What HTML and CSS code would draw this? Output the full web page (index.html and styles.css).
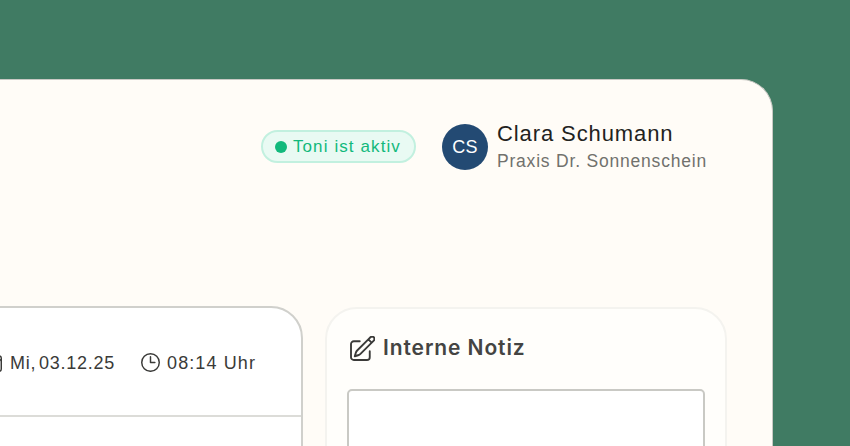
FILE: index.html
```html
<!DOCTYPE html>
<html lang="de">
<head>
    <meta charset="UTF-8">
    <title>Praxis Dr. Sonnenschein</title>
    <link rel="stylesheet" href="styles.css">
</head>
<body>
    <div class="panel">
        <header class="topbar">
            <div class="status"><span class="status-dot"></span>Toni ist aktiv</div>
            <div class="user">
                <div class="avatar">CS</div>
                <div>
                    <div class="user-name">Clara Schumann</div>
                    <div class="user-org">Praxis Dr. Sonnenschein</div>
                </div>
            </div>
        </header>
        <div class="columns">
            <section class="call-card">
                <div class="call-meta">
                    <span class="meta-item meta-date">
                        <svg class="icon" viewBox="2.25 2.25 19.5 19.5" fill="none" stroke="#3a3a38" stroke-width="1.5" stroke-linecap="round" stroke-linejoin="round"><path d="M6.750 3v2.250M17.250 3v2.250M3 18.750V7.500a2.250 2.250 0 0 1 2.250-2.250h13.500A2.250 2.250 0 0 1 21 7.500v11.250m-18 0A2.250 2.250 0 0 0 5.250 21h13.500A2.250 2.250 0 0 0 21 18.750m-18 0v-7.500A2.250 2.250 0 0 1 5.250 9h13.500A2.250 2.250 0 0 1 21 11.250v7.500"/></svg>
                        Mi, 03.12.25
                    </span>
                    <span class="meta-item meta-time">
                        <svg class="icon" viewBox="2.25 2.25 19.5 19.5" fill="none" stroke="#3a3a38" stroke-width="1.5" stroke-linecap="round" stroke-linejoin="round"><path d="M12 6v6h4.500m4.500 0a9 9 0 1 1-18 0 9 9 0 0 1 18 0Z"/></svg>
                        08:14 Uhr
                    </span>
                </div>
            </section>
            <section class="note-card">
                <h2 class="note-title">
                    <svg class="note-icon" viewBox="2.2 1.8 20 20" fill="none" stroke="#3a3a38" stroke-width="1.5" stroke-linecap="round" stroke-linejoin="round"><path d="m16.862 4.487 1.687-1.688a1.875 1.875 0 1 1 2.652 2.652L10.582 16.070a4.500 4.500 0 0 1-1.897 1.130L6 18l.8-2.685a4.500 4.500 0 0 1 1.130-1.897l8.932-8.931Zm0 0L19.500 7.125M18 14v4.750A2.250 2.250 0 0 1 15.750 21H5.250A2.250 2.250 0 0 1 3 18.750V8.250A2.250 2.250 0 0 1 5.250 6H10"/></svg>
                    Interne Notiz
                </h2>
                <div class="note-field"></div>
            </section>
        </div>
    </div>
</body>
</html>
```

FILE: styles.css
```css
html, body {
    height: 100%;
    overflow: hidden;
}
body {
    margin: 0;
    padding: 79px 77px 0 0;
    box-sizing: border-box;
    background: #407b63;
    font-family: "Liberation Sans", Arial, sans-serif;
    color: #3a3a38;
}
.panel {
    margin-left: -300px;
    height: 367px;
    box-sizing: border-box;
    overflow: hidden;
    padding: 41px 45px 0 0;
    background: #fffcf7;
    border: 1px solid #c9c9c4;
    border-bottom: none;
    border-radius: 32px 32px 0 0;
}
.topbar {
    display: flex;
    justify-content: flex-end;
    align-items: center;
    gap: 26px;
    padding-right: 20px;
}
.status {
    display: flex;
    align-items: center;
    gap: 6px;
    height: 33px;
    padding: 0 13px 0 12px;
    box-sizing: border-box;
    background: #e9faf3;
    border: 2px solid #c2f0df;
    border-radius: 17px;
    color: #12b97c;
    font-size: 17px;
    letter-spacing: 1.100px;
}
.status-dot {
    width: 12px;
    height: 12px;
    border-radius: 50%;
    background: #12b97c;
}
.user {
    display: flex;
    align-items: center;
    gap: 9px;
}
.avatar {
    width: 46px;
    height: 46px;
    border-radius: 50%;
    background: #234a73;
    color: #fff;
    font-size: 18px;
    letter-spacing: 0.3px;
    line-height: 46px;
    text-align: center;
}
.user-name {
    font-size: 22px;
    line-height: 26px;
    color: #222220;
    letter-spacing: 0.9px;
}
.user-org {
    margin-top: 3px;
    font-size: 17.5px;
    line-height: 22px;
    color: #71716d;
    letter-spacing: 0.8px;
}
.columns {
    display: flex;
    align-items: flex-start;
    gap: 22px;
    margin-top: 134px;
}
.call-card {
    flex: 1;
    height: 300px;
    background: #fff;
    border: 2px solid #d0d0cc;
    border-radius: 32px;
}
.call-meta {
    display: flex;
    justify-content: flex-end;
    gap: 26px;
    height: 109px;
    padding: 45px 45px 0 0;
    box-sizing: border-box;
    border-bottom: 2px solid #dcdcd8;
    font-size: 18px;
}
.meta-item {
    display: flex;
    align-items: flex-start;
    line-height: 20px;
}
.meta-date {
    gap: 8px;
    letter-spacing: 0.75px;
    word-spacing: -3px;
}
.meta-time {
    gap: 7px;
    letter-spacing: 1.100px;
}
.icon {
    width: 19px;
    height: 19px;
}
.note-card {
    width: 402px;
    height: 300px;
    flex-shrink: 0;
    margin-top: 1px;
    box-sizing: border-box;
    padding: 25px 20px 0;
    background: #fffefb;
    border: 2px solid #f4f3ef;
    border-radius: 32px;
}
.note-title {
    display: flex;
    align-items: center;
    gap: 8px;
    margin: 0 0 27px 3px;
    font-family: "Inter", "Liberation Sans", sans-serif;
    font-size: 21px;
    font-weight: 600;
    line-height: 28px;
    letter-spacing: 0.9px;
    color: #444442;
}
.note-icon {
    width: 25px;
    height: 25px;
}
.note-field {
    height: 200px;
    background: #fff;
    border: 2px solid #c9c9c4;
    border-radius: 5px;
}
```
